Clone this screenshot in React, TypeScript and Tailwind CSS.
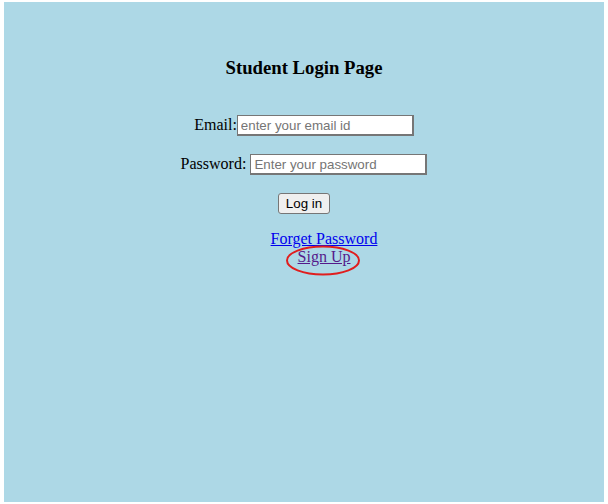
import React from "react";

export default function App() {
  const serif = { fontFamily: '"Liberation Serif", "Times New Roman", serif' };
  const sans = { fontFamily: '"Liberation Sans", Arial, sans-serif' };
  return (
    <div className="w-[608px] h-[504px] bg-white pt-[2px] pl-[4px]" style={serif}>
      <div className="w-[600px] h-[500px] bg-[#add8e6] flex flex-col items-center text-black">
        <h3 className="mt-[55px] text-[18.72px] leading-[22px] font-bold">Student Login Page</h3>
        <div className="mt-[36px] flex items-center h-[21px] text-[16px] leading-[18.4px]">
          <span>Email:</span>
          <input
            type="text"
            placeholder="enter your email id"
            className="w-[177px] h-[21px] bg-white border-t border-l border-r-2 border-b-2 border-[#767676] px-[3px] text-[13.33px] placeholder:text-[#757575] outline-none"
            style={sans}
          />
        </div>
        <div className="mt-[18px] flex items-center h-[21px] text-[16px] leading-[18.4px]">
          <span className="whitespace-pre">Password: </span>
          <input
            type="password"
            placeholder="Enter your password"
            className="w-[177px] h-[21px] bg-white border-t border-l border-r-2 border-b-2 border-[#767676] px-[3px] text-[13.33px] placeholder:text-[#757575] outline-none"
            style={sans}
          />
        </div>
        <button
          className="mt-[18px] h-[21px] px-[7px] bg-[#efefef] border border-[#767676] rounded-[3px] text-[13.33px] leading-[15px] text-black"
          style={sans}
        >
          Log in
        </button>
        <ul className="mt-[16px] pl-[40px] w-full flex flex-col items-center text-[16px] leading-[18.4px]">
          <li>
            <a href="#" className="text-[#0000ee] underline">Forget Password</a>
          </li>
          <li>
            <span className="relative inline-block">
              <a href="#" className="text-[#551a8b] underline">Sign Up</a>
              <svg
                className="absolute left-[-12px] top-[-3px] pointer-events-none"
                width="76"
                height="31"
                viewBox="0 0 76 31"
              >
                <ellipse cx="37" cy="15.5" rx="36" ry="14" fill="none" stroke="#e01e1e" strokeWidth="2" />
              </svg>
            </span>
          </li>
        </ul>
      </div>
    </div>
  );
}
